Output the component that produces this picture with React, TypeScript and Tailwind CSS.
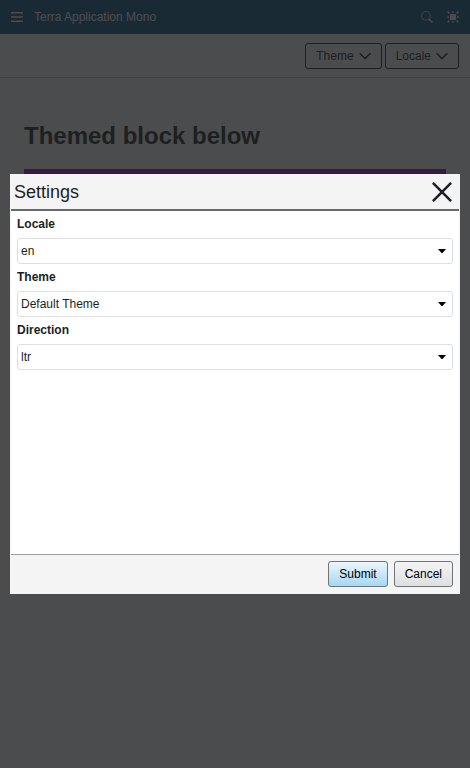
import type { ReactNode } from 'react';

function ChevronDown() {
  return (
    <svg viewBox="0 0 12 12" className="size-3" fill="none" stroke="currentColor" strokeWidth="1.5" aria-hidden="true">
      <path d="M0.6 3.2 6 8.6l5.4-5.4" />
    </svg>
  );
}

function MenuButton({ children }: { children: ReactNode }) {
  return (
    <button
      type="button"
      className="flex h-[26px] items-center gap-[5px] rounded-[3px] border border-[#1c1f21] px-2.5 text-xs text-[#1c1f21]"
    >
      {children}
      <ChevronDown />
    </button>
  );
}

function SelectField({ id, label, options }: { id: string; label: string; options: string[] }) {
  return (
    <div className="flex flex-col">
      <label htmlFor={id} className="flex h-[27px] items-center pb-0.5 text-xs font-bold">
        {label}
      </label>
      <div className="relative">
        <select
          id={id}
          className="block h-[26px] w-full appearance-none rounded-[3px] border border-[#dedfe0] bg-white pr-6 pl-[3px] text-xs text-[#1c1f21]"
        >
          {options.map((option) => (
            <option key={option}>{option}</option>
          ))}
        </select>
        <svg viewBox="0 0 8 4" className="pointer-events-none absolute top-[11px] right-[7px] h-1 w-2" aria-hidden="true">
          <path d="M0 0h8L4.5 4h-1z" fill="#000" />
        </svg>
      </div>
    </div>
  );
}

export default function App() {
  return (
    <div className="min-h-screen bg-white font-['Liberation_Sans',Arial,sans-serif] text-[#1c1f21]">
      <header className="flex h-[34px] items-center bg-[#055684] px-[11px] text-white">
        <button type="button" aria-label="Menu">
          <svg viewBox="0 0 12 12" className="size-3" fill="currentColor" aria-hidden="true">
            <path d="M0 1h12v1.6H0zM0 5.2h12v1.6H0zM0 9.4h12V11H0z" />
          </svg>
        </button>
        <span className="ml-[11px] flex-1 text-xs">Terra Application Mono</span>
        <button type="button" aria-label="Search" className="mr-[14px]">
          <svg viewBox="0 0 12 12" className="size-3" fill="none" stroke="currentColor" aria-hidden="true">
            <circle cx="4.9" cy="4.9" r="4.4" strokeWidth="0.8" />
            <path d="m8 8 3.5 3.5" strokeWidth="1.5" />
          </svg>
        </button>
        <button type="button" aria-label="Settings">
          <svg viewBox="0 0 12 12" className="size-3" fill="none" stroke="currentColor" aria-hidden="true">
            <rect x="2.9" y="2.9" width="6.2" height="6.2" rx="1.2" fill="currentColor" stroke="none" />
            <path d="M6 0.4v1.6M6 10v1.6M0.4 6h1.6M10 6h1.6" strokeWidth="1.4" />
            <path d="M0.6 0.6 2.4 2.4M11.4 0.6 9.6 2.4M0.6 11.4l1.8-1.8M11.4 11.4 9.6 9.6" strokeWidth="1.4" />
          </svg>
        </button>
      </header>

      <nav className="flex h-11 items-center justify-end gap-[3px] border-b border-[#c8cacb] pr-[11px]">
        <MenuButton>Theme</MenuButton>
        <MenuButton>Locale</MenuButton>
      </nav>

      <main className="px-6 pt-[42px]">
        <h1 className="text-2xl leading-8 font-bold">Themed block below</h1>
        <div className="mt-[17px] h-24 bg-[#9006d2]" />
      </main>

      <div className="fixed inset-0 flex items-center justify-center bg-[rgba(30,31,32,0.8)] px-2.5">
        <section
          role="dialog"
          aria-modal="true"
          aria-labelledby="settings-title"
          className="flex h-[420px] w-full flex-col border border-[#f4f4f4] bg-white"
        >
          <div className="flex h-9 items-center justify-between border-b-2 border-[#64696c] bg-[#f4f4f4] pr-[7px] pl-[3px]">
            <h2 id="settings-title" className="text-lg">
              Settings
            </h2>
            <button type="button" aria-label="Close">
              <svg viewBox="0 0 20 20" className="size-5" fill="none" stroke="currentColor" strokeWidth="2.5" aria-hidden="true">
                <path d="m0.9 0.9 18.2 18.2M19.1 0.9 0.9 19.1" />
              </svg>
            </button>
          </div>
          <form className="flex-1 px-1.5">
            <SelectField id="locale" label="Locale" options={['en']} />
            <SelectField id="theme" label="Theme" options={['Default Theme']} />
            <SelectField id="direction" label="Direction" options={['ltr', 'rtl']} />
          </form>
          <div className="flex justify-end gap-1.5 border-t border-[#9b9da0] bg-[#f4f4f4] p-1.5">
            <button
              type="button"
              className="h-[26px] rounded-[3px] border border-[#6f7477] bg-linear-to-b from-[#ebf6fd] to-[#a5d8f3] px-2.5 text-xs text-black"
            >
              Submit
            </button>
            <button
              type="button"
              className="h-[26px] rounded-[3px] border border-[#6f7477] bg-linear-to-b from-[#f4f4f4] to-[#dedfe0] px-2.5 text-xs text-black"
            >
              Cancel
            </button>
          </div>
        </section>
      </div>
    </div>
  );
}
